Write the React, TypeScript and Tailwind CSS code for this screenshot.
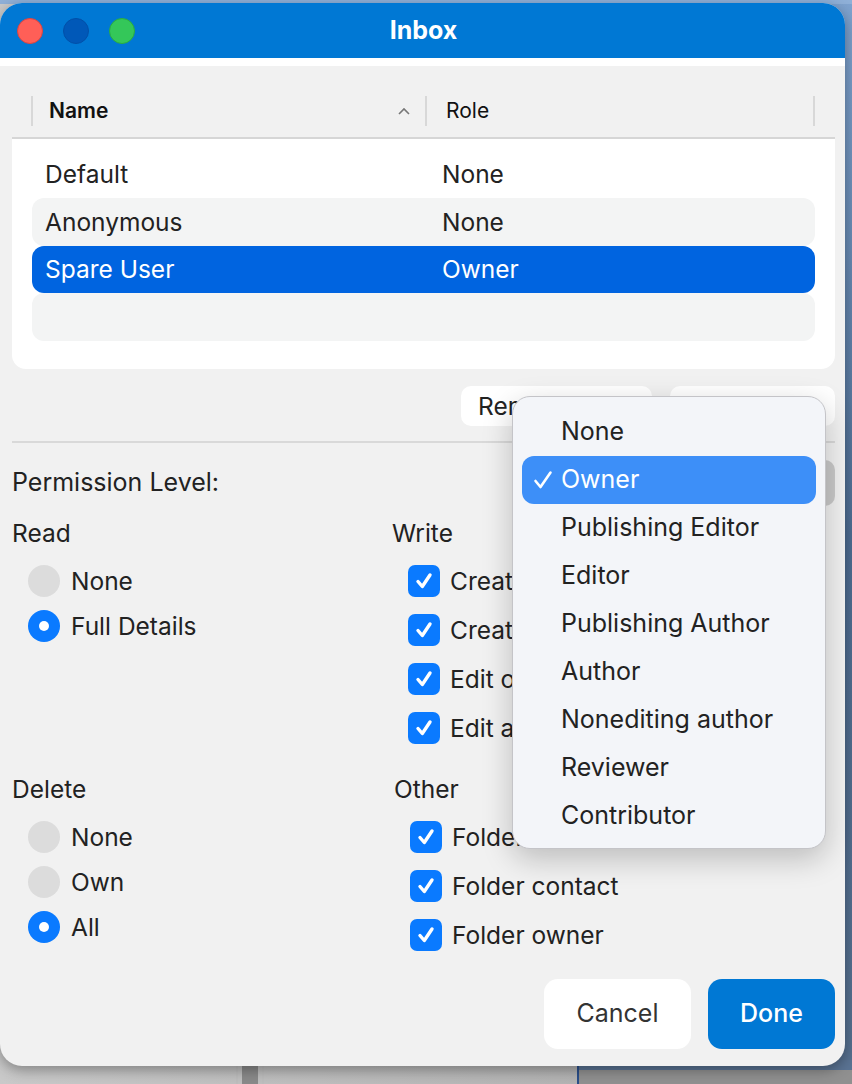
import React from "react";

const font = { fontFamily: 'Inter, "Noto Sans", "Liberation Sans", sans-serif' };

function Radio({ on, label }: { on?: boolean; label: string }) {
  return (
    <div className="flex h-[32px] items-center">
      <div className="ml-[16px] flex h-[32px] w-[32px] items-center justify-center">
        {on ? (
          <div className="flex h-[32px] w-[32px] items-center justify-center rounded-full bg-[#0a7aff]">
            <div className="h-[10px] w-[10px] rounded-full bg-white" />
          </div>
        ) : (
          <div className="h-[32px] w-[32px] rounded-full bg-[#dcdcdc]" />
        )}
      </div>
      <span className="ml-[11px] text-[24.5px] text-[#222]">{label}</span>
    </div>
  );
}

function Check({ label }: { label: string }) {
  return (
    <div className="flex h-[32px] items-center whitespace-nowrap">
      <div className="ml-[16px] flex h-[32px] w-[32px] items-center justify-center rounded-[7px] bg-[#0a7aff]">
        <svg width="22" height="22" viewBox="0 0 22 22" fill="none">
          <path d="M5 11.5 L9.3 16.5 L17 5" stroke="white" strokeWidth="3.4" strokeLinecap="round" strokeLinejoin="round" />
        </svg>
      </div>
      <span className="ml-[10px] text-[24.5px] text-[#222]">{label}</span>
    </div>
  );
}

const menuItems = [
  "None",
  "Owner",
  "Publishing Editor",
  "Editor",
  "Publishing Author",
  "Author",
  "Nonediting author",
  "Reviewer",
  "Contributor",
];

export default function App() {
  return (
    <div className="relative h-[1084px] w-[852px] overflow-hidden bg-gradient-to-r from-[#c9c9c9] to-[#a9a9a9]" style={font}>
      {/* backdrop bits */}
      <div className="absolute right-0 top-0 h-[1066px] w-[20px] bg-gradient-to-b from-[#7fa3cf] via-[#4f6f95] to-[#56708f]" />
      <div className="absolute left-[242px] top-[1060px] h-[24px] w-[16px] bg-[#8a8a8a]" />
      <div className="absolute left-[236px] top-[1060px] h-[24px] w-[2px] bg-[#bdbdbd]" />
      <div className="absolute left-[262px] top-[1060px] h-[24px] w-[2px] bg-[#bdbdbd]" />
      <div className="absolute left-[577px] top-[1060px] h-[24px] w-[2px] bg-[#2b4f8a]" />
      <div className="absolute left-[579px] top-[1060px] h-[10px] w-[273px] bg-[#5a7393]" />
      <div className="absolute left-[579px] top-[1070px] h-[14px] w-[273px] bg-[#909090]" />
      <div className="absolute left-0 top-0 h-[4px] w-[852px] bg-[#8fb0d8]" />

      {/* window */}
      <div className="relative mt-[3px] flex h-[1063px] w-[845px] flex-col overflow-hidden rounded-[22px] bg-[#f1f1f1] shadow-[0_4px_14px_rgba(0,0,0,0.35)]">
        {/* title bar */}
        <div className="relative flex h-[55px] shrink-0 items-center bg-[#0078d4]">
          <div className="ml-[17px] flex gap-[20px]">
            <div className="h-[26px] w-[26px] rounded-full border border-[#e0443e] bg-[#ff5f57]" />
            <div className="h-[26px] w-[26px] rounded-full border border-[#0050a8] bg-[#0058b8]" />
            <div className="h-[26px] w-[26px] rounded-full border border-[#2aac3f] bg-[#34c759]" />
          </div>
          <div className="absolute inset-0 flex items-center justify-center pl-[2px] text-[25px] font-bold text-white">Inbox</div>
        </div>
        <div className="h-[8px] shrink-0 bg-white" />

        {/* table */}
        <div className="ml-[12px] mr-[10px]">
          <div className="flex h-[73px] items-end border-b-2 border-[#d6d6d6] pb-[11px]">
            <div className="ml-[19px] flex h-[30px] w-[394px] items-center border-l-2 border-[#d8d8d8]">
              <span className="ml-[16px] text-[21px] font-semibold text-[#111]">Name</span>
              <svg className="ml-auto mr-[14px]" width="14" height="10" viewBox="0 0 14 10">
                <path d="M2 8 L7 3 L12 8" stroke="#777" strokeWidth="1.6" fill="none" />
              </svg>
            </div>
            <div className="flex h-[30px] w-[390px] items-center border-x-2 border-[#d8d8d8]">
              <span className="ml-[19px] text-[21px] text-[#111]">Role</span>
            </div>
          </div>
          <div className="rounded-b-[14px] bg-white px-[20px] pb-[28px] pt-[11px] text-[24.5px]">
            <div className="flex h-[48px] items-center text-[#222]">
              <span className="w-[410px] pl-[13px]">Default</span>
              <span>None</span>
            </div>
            <div className="flex h-[48px] items-center rounded-[12px] bg-[#f3f4f4] text-[#222]">
              <span className="w-[410px] pl-[13px]">Anonymous</span>
              <span>None</span>
            </div>
            <div className="flex h-[47px] items-center rounded-[12px] bg-[#0064e0] text-white">
              <span className="w-[410px] pl-[13px]">Spare User</span>
              <span>Owner</span>
            </div>
            <div className="h-[48px] rounded-[12px] bg-[#f3f4f4]" />
          </div>
        </div>

        {/* buttons */}
        <div className="mr-[10px] mt-[17px] flex h-[40px] justify-end gap-[18px]">
          <div className="flex w-[191px] items-center rounded-[10px] bg-white pl-[17px] text-[24.5px] text-[#222]">Remove User</div>
          <div className="flex w-[165px] items-center justify-center rounded-[10px] bg-white text-[24.5px] text-[#222]">Add User</div>
        </div>
        <div className="ml-[12px] mr-[10px] mt-[15px] h-[2px] bg-[#d9d9d9]" />

        {/* permission level */}
        <div className="mt-[17px] flex h-[46px] items-center pl-[12px]">
          <span className="text-[25px] text-[#222]">Permission Level:</span>
          <div className="ml-auto mr-[10px] h-[46px] w-[300px] rounded-[10px] bg-[#c9c9c9]" />
        </div>

        {/* read / write */}
        <div className="mt-[12px] flex">
          <div className="w-[392px] pl-[12px]">
            <div className="h-[30px] text-[24.5px] leading-[30px] text-[#222]">Read</div>
            <div className="mt-[17px] flex flex-col gap-[13px]">
              <Radio label="None" />
              <Radio on label="Full Details" />
            </div>
          </div>
          <div className="flex-1">
            <div className="h-[30px] text-[24.5px] leading-[30px] text-[#222]">Write</div>
            <div className="mt-[17px] flex flex-col gap-[17px]">
              <Check label="Create items" />
              <Check label="Create subfolders" />
              <Check label="Edit own" />
              <Check label="Edit all" />
            </div>
          </div>
        </div>

        {/* delete / other */}
        <div className="mt-[30px] flex">
          <div className="w-[394px] pl-[12px]">
            <div className="h-[30px] text-[24.5px] leading-[30px] text-[#222]">Delete</div>
            <div className="mt-[17px] flex flex-col gap-[13px]">
              <Radio label="None" />
              <Radio label="Own" />
              <Radio on label="All" />
            </div>
          </div>
          <div className="flex-1">
            <div className="h-[30px] text-[24.5px] leading-[30px] text-[#222]">Other</div>
            <div className="mt-[17px] flex flex-col gap-[17px]">
              <Check label="Folder visible" />
              <Check label="Folder contact" />
              <Check label="Folder owner" />
            </div>
          </div>
        </div>

        {/* footer buttons */}
        <div className="mr-[10px] mt-[28px] flex justify-end gap-[17px]">
          <div className="flex h-[70px] w-[147px] items-center justify-center rounded-[14px] bg-white text-[25px] text-[#333]">Cancel</div>
          <div className="flex h-[70px] w-[127px] items-center justify-center rounded-[14px] bg-[#0078d4] text-[25px] font-medium text-white">Done</div>
        </div>
      </div>

      {/* dropdown menu */}
      <div className="absolute left-[512px] top-[396px] w-[314px] rounded-[18px] border border-[#c4c4c8] bg-[#f3f5f9] pb-[8px] pt-[11px] shadow-[0_10px_30px_rgba(0,0,0,0.22)]">
        {menuItems.map((m, i) => (
          <div
            key={m}
            className={
              i === 1
                ? "mx-[9px] flex h-[48px] items-center rounded-[12px] bg-[#3d8ff8] text-[25px] text-white"
                : "mx-[9px] flex h-[48px] items-center text-[25px] text-[#222]"
            }
          >
            <span className="flex w-[39px] items-center pl-[11px]">
              {i === 1 ? (
                <svg width="20" height="20" viewBox="0 0 20 20" fill="none">
                  <path d="M2.5 11 L7.5 17 L17.5 2.5" stroke="white" strokeWidth="2.6" strokeLinecap="round" strokeLinejoin="round" />
                </svg>
              ) : null}
            </span>
            <span>{m}</span>
          </div>
        ))}
      </div>
    </div>
  );
}
